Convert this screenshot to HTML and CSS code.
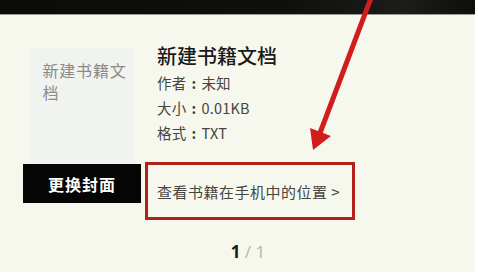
FILE: index.html
```html
<!DOCTYPE html>
<html lang="zh">
<head>
<meta charset="utf-8">
<link rel="stylesheet" href="styles.css">
</head>
<body>
<div class="page">
  <div class="topbar"></div>
  <div class="main">
    <div class="left">
      <div class="cover">新建书籍文档</div>
      <div class="btn">更换封面</div>
    </div>
    <div class="right">
      <div class="title">新建书籍文档</div>
      <div class="meta">作者<span class="colon">:</span>未知</div>
      <div class="meta">大小<span class="colon">:</span>0.01KB</div>
      <div class="meta">格式<span class="colon">:</span>TXT</div>
      <div class="locate">查看书籍在手机中的位置 &gt;</div>
    </div>
  </div>
  <div class="pager"><span class="cur">1</span><span class="tot"> / 1</span></div>
  <svg class="arrow" width="478" height="275" viewBox="0 0 478 275">
    <line x1="371" y1="-2" x2="320" y2="133" stroke="#d21d1d" stroke-width="5" stroke-linecap="round"/>
    <polygon points="310,128 331,136 313,150" fill="#d21d1d"/>
  </svg>
</div>
</body>
</html>
```
FILE: styles.css
```css
html, body {
  margin: 0;
  padding: 0;
  background: #ffffff;
}
.page {
  position: relative;
  width: 475px;
  height: 272px;
  background: #f7f8ed;
  font-family: "Noto Sans CJK SC", "Noto Sans", sans-serif;
  overflow: hidden;
}
.topbar {
  height: 14px;
  background: linear-gradient(90deg, #0b0b0a 0%, #0f0f0d 60%, #1c1c1a 85%, #0e0e0d 100%);
  border-bottom: 1px solid #9b9c94;
}
.main {
  display: flex;
  align-items: flex-start;
  padding: 27px 0 0 23px;
}
.left {
  width: 118px;
  margin-top: 6px;
  display: flex;
  flex-direction: column;
  align-items: center;
}
.cover {
  width: 105px;
  height: 115px;
  box-sizing: border-box;
  background: #f1f3f0;
  color: #8a8b86;
  font-size: 16px;
  line-height: 22px;
  padding: 11px 4px 0 13px;
  letter-spacing: 0.8px;
}
.btn {
  margin-top: 1px;
  width: 118px;
  height: 39px;
  background: #050505;
  color: #ffffff;
  font-size: 16px;
  font-weight: 700;
  display: flex;
  align-items: center;
  justify-content: center;
  letter-spacing: 1px;
}
.right {
  margin-left: 4px;
  display: flex;
  flex-direction: column;
}
.title {
  padding-left: 12px;
  font-size: 20px;
  line-height: 28px;
  font-weight: 500;
  color: #1b1b1b;
}
.meta {
  padding-left: 12px;
  font-size: 14.5px;
  line-height: 25px;
  color: #444441;
  letter-spacing: 0.2px;
}
.colon {
  display: inline-block;
  width: 15px;
  text-align: center;
  font-weight: 700;
}
.locate {
  margin-top: 17px;
  width: 210px;
  height: 58px;
  box-sizing: border-box;
  border: 3px solid #b3211d;
  padding-left: 9px;
  display: flex;
  align-items: center;
  font-size: 15px;
  letter-spacing: 0.5px;
  color: #454542;
  white-space: nowrap;
}
.pager {
  margin-top: 21px;
  display: flex;
  justify-content: center;
  padding-left: 21px;
  font-family: "Noto Sans", sans-serif;
  font-size: 17px;
  line-height: 22px;
}
.cur {
  color: #1a1a1a;
  font-weight: 700;
}
.tot {
  color: #b8b9b2;
  white-space: pre;
}
.arrow {
  position: absolute;
  left: 0;
  top: 0;
  pointer-events: none;
}
```
